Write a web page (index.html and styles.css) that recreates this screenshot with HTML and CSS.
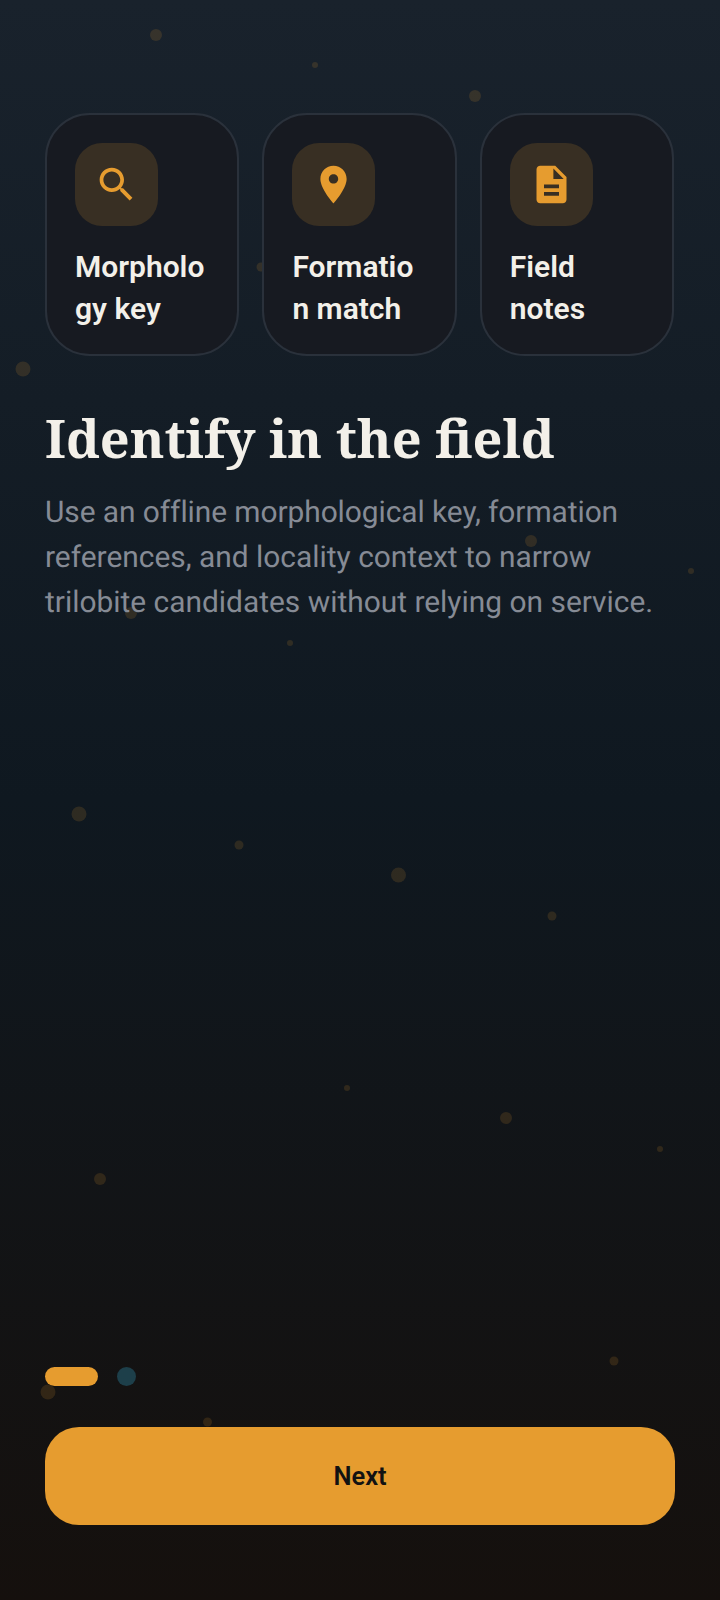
FILE: index.html
```html
<!DOCTYPE html>
<html lang="en">
<head>
    <meta charset="UTF-8">
    <meta name="viewport" content="width=device-width, initial-scale=1.0">
    <title>Identify in the field</title>
    <link rel="stylesheet" href="styles.css">
</head>
<body>

    <!-- Background specks -->
    <svg class="specks" width="720" height="1600" viewBox="0 0 720 1600" aria-hidden="true">
        <circle cx="156" cy="35" r="6"/>
        <circle cx="315" cy="65" r="3"/>
        <circle cx="475" cy="96" r="6"/>
        <circle cx="261" cy="267" r="4.5"/>
        <circle cx="23" cy="369" r="7.5"/>
        <circle cx="531" cy="541" r="6"/>
        <circle cx="691" cy="571" r="3"/>
        <circle cx="131" cy="613" r="6"/>
        <circle cx="290" cy="643" r="3"/>
        <circle cx="79" cy="814" r="7.5"/>
        <circle cx="239" cy="845" r="4.5"/>
        <circle cx="398.5" cy="875" r="7.5"/>
        <circle cx="552" cy="916" r="4.5"/>
        <circle cx="347" cy="1088" r="3"/>
        <circle cx="506" cy="1118" r="6"/>
        <circle cx="660" cy="1149" r="3"/>
        <circle cx="100" cy="1179" r="6"/>
        <circle cx="614" cy="1361" r="4.5"/>
        <circle cx="48" cy="1392" r="7.5"/>
        <circle cx="207.5" cy="1422" r="4.5"/>
    </svg>

    <div class="screen">
        <!-- Feature cards -->
        <div class="cards">
            <div class="card">
                <div class="card-icon">
                    <svg viewBox="0 0 24 24"><path d="M15.5 14h-.79l-.28-.27C15.41 12.59 16 11.11 16 9.5 16 5.91 13.09 3 9.5 3S3 5.91 3 9.5 5.91 16 9.5 16c1.61 0 3.09-.59 4.23-1.57l.27.28v.79l5 4.99L20.49 19l-4.99-5zm-6 0C7.01 14 5 11.99 5 9.5S7.01 5 9.5 5 14 7.01 14 9.5 11.99 14 9.5 14z"/></svg>
                </div>
                <div class="card-label">Morphology key</div>
            </div>
            <div class="card">
                <div class="card-icon">
                    <svg viewBox="0 0 24 24"><path d="M12 2C8.13 2 5 5.13 5 9c0 5.25 7 13 7 13s7-7.75 7-13c0-3.87-3.13-7-7-7zm0 9.5c-1.38 0-2.5-1.12-2.5-2.5s1.12-2.5 2.5-2.5 2.5 1.12 2.5 2.5-1.12 2.5-2.5 2.5z"/></svg>
                </div>
                <div class="card-label">Formation match</div>
            </div>
            <div class="card">
                <div class="card-icon">
                    <svg viewBox="0 0 24 24"><path d="M14 2H6c-1.1 0-1.99.9-1.99 2L4 20c0 1.1.89 2 1.99 2H18c1.1 0 2-.9 2-2V8l-6-6zm2 16H8v-2h8v2zm0-4H8v-2h8v2zm-3-5V3.5L18.5 9H13z"/></svg>
                </div>
                <div class="card-label">Field notes</div>
            </div>
        </div>

        <!-- Intro text -->
        <h1 class="title">Identify in the field</h1>
        <p class="lead">Use an offline morphological key, formation references, and locality context to narrow trilobite candidates without relying on service.</p>

        <!-- Pager and button -->
        <div class="bottom">
            <div class="pager">
                <span class="pager-active"></span>
                <span class="pager-dot"></span>
            </div>
            <button class="next">Next</button>
        </div>
    </div>

</body>
</html>
```

FILE: styles.css
```css
/* Page */
body { margin: 0; background: linear-gradient(180deg, #19222c 0%, #0f1820 50%, #15100d 100%); font-family: Roboto, sans-serif; color: #f3f0e9; }
.specks { position: absolute; left: 0; top: 0; fill: #e69c2f; fill-opacity: 0.15; }
.screen { position: relative; box-sizing: border-box; height: 1600px; padding: 113px 45px 75px; display: flex; flex-direction: column; }

/* Cards */
.cards { display: flex; gap: 23px; }
.card { flex: 0 0 194.4px; box-sizing: border-box; height: 243px; padding: 28px; border: 2px solid #2a313b; border-radius: 45px; background: #171a21; }
.card-icon { width: 83px; height: 83px; display: flex; align-items: center; justify-content: center; border-radius: 27px; background: #382f23; }
.card-icon svg { width: 45px; height: 45px; fill: #e69c2f; }
.card-label { margin-top: 20px; font-size: 30px; font-weight: 600; line-height: 42px; overflow-wrap: anywhere; }

/* Text */
.title { margin: 46px 0 0; font-family: "Noto Serif", "Liberation Serif", serif; font-size: 52.2px; font-weight: 700; line-height: 72px; }
.lead { margin: 16px 0 0; font-size: 29.9px; line-height: 45px; color: #868b95; text-rendering: geometricPrecision; }
.lead::first-line { letter-spacing: -0.07px; }

/* Bottom */
.bottom { margin-top: auto; }
.pager { display: flex; gap: 19px; margin-bottom: 41px; }
.pager-active { width: 53px; height: 19px; border-radius: 10px; background: #e69c2f; }
.pager-dot { width: 19px; height: 19px; border-radius: 50%; background: #1d3f4a; }
.next { display: block; width: 100%; height: 98px; border: none; border-radius: 34px; background: #e69c2f; color: #121212; font-family: Roboto, sans-serif; font-size: 25.5px; font-weight: 600; }
```
